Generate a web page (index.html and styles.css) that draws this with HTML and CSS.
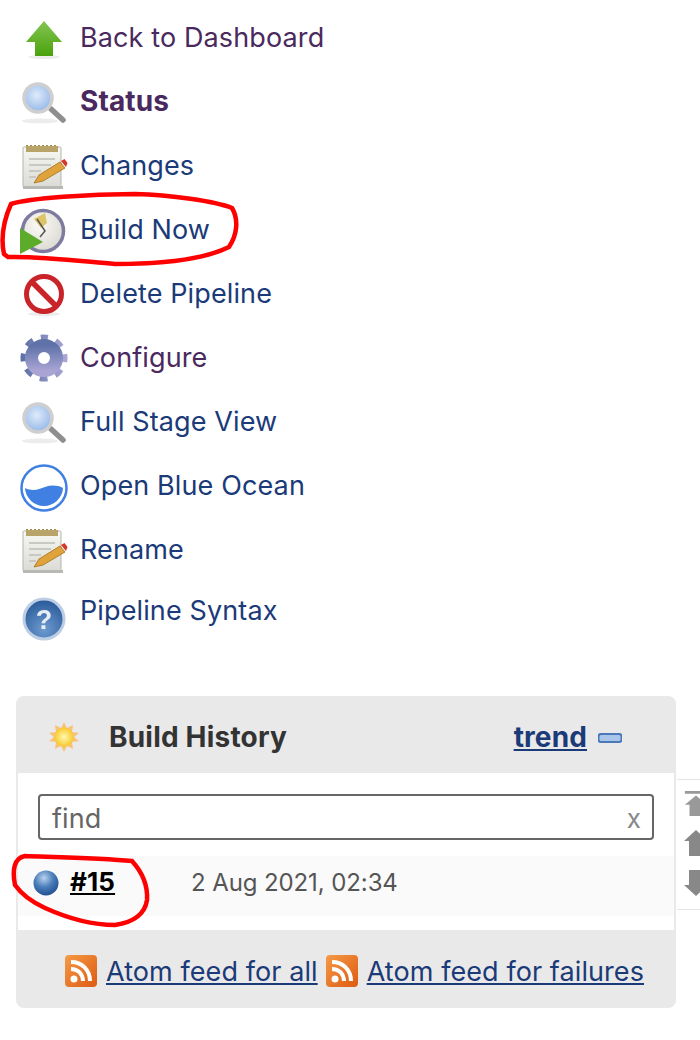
FILE: index.html
```html
<!DOCTYPE html>
<html>
<head>
    <meta charset="utf-8">
    <link rel="stylesheet" href="styles.css">
    <title>Pipeline</title>
</head>
<body>
    <svg class="defs" width="0" height="0">
        <defs>
            <linearGradient id="gArrow" x1="0" y1="0" x2="0" y2="1"><stop offset="0" stop-color="#84c553"/><stop offset="1" stop-color="#4aa20c"/></linearGradient>
            <radialGradient id="gLens" cx="0.45" cy="0.4" r="0.65"><stop offset="0" stop-color="#dfeafa"/><stop offset="1" stop-color="#8fb5e6"/></radialGradient>
            <linearGradient id="gPaper" x1="0" y1="0" x2="0" y2="1"><stop offset="0" stop-color="#f7f7f3"/><stop offset="1" stop-color="#dcdcd6"/></linearGradient>
            <linearGradient id="gGear" x1="0" y1="0" x2="0" y2="1"><stop offset="0" stop-color="#5f72a8"/><stop offset="1" stop-color="#a9a4d4"/></linearGradient>
            <radialGradient id="gClock" cx="0.4" cy="0.35" r="0.75"><stop offset="0" stop-color="#fbfaf5"/><stop offset="1" stop-color="#d8d6cf"/></radialGradient>
            <radialGradient id="gHelp" cx="0.5" cy="0.75" r="0.7"><stop offset="0" stop-color="#6d9bd0"/><stop offset="1" stop-color="#2c5c9b"/></radialGradient>
            <radialGradient id="gBall" cx="0.42" cy="0.3" r="0.75"><stop offset="0" stop-color="#b8d3ee"/><stop offset="0.5" stop-color="#4a7db9"/><stop offset="1" stop-color="#1e4a8c"/></radialGradient>
            <radialGradient id="gSun" cx="0.5" cy="0.5" r="0.5"><stop offset="0" stop-color="#fff9b0"/><stop offset="1" stop-color="#f8c92e"/></radialGradient>
            <linearGradient id="gRss" x1="0" y1="0" x2="1" y2="1"><stop offset="0" stop-color="#f59a45"/><stop offset="1" stop-color="#dd5a12"/></linearGradient>
            <symbol id="iconSearch" viewBox="0 0 48 48" overflow="visible">
                <ellipse cx="20" cy="44" rx="18" ry="2.500" fill="#ececec"/>
                <path d="M31 32l12 11" stroke="#8f8f8f" stroke-width="5.500" stroke-linecap="round"/>
                <circle cx="18" cy="21" r="14" fill="url(#gLens)" stroke="#cfcfcf" stroke-width="3.500"/>
            </symbol>
            <symbol id="iconNote" viewBox="0 0 48 48" overflow="visible">
                <rect x="3" y="6" width="38" height="40" rx="1" fill="url(#gPaper)" stroke="#b5b5ae"/>
                <rect x="3" y="45" width="40" height="3" fill="#b9b9b4"/>
                <rect x="6" y="5" width="32" height="6" fill="#b8a468"/>
                <path d="M7 5v-1M11 5v-1M15 5v-1M19 5v-1M23 5v-1M27 5v-1M31 5v-1M35 5v-1" stroke="#a08c50" stroke-width="2"/>
                <path d="M9 18h26M9 24h22M9 30h12M9 36h7" stroke="#c8c8c4" stroke-width="2"/>
                <path d="M14 42l5-8 21-13 5 6-22 13z" fill="#e0a33c" stroke="#b0812f"/>
                <path d="M41 20l5 6 1.500-4-3-4z" fill="#d8342c"/>
            </symbol>
            <symbol id="iconRss" viewBox="0 0 32 32">
                <rect width="32" height="32" rx="4" fill="url(#gRss)"/>
                <circle cx="9" cy="24" r="3.500" fill="#fff"/>
                <path d="M6 14c7 0 12 5 12 12M6 7c11 0 19 8 19 19" fill="none" stroke="#fff" stroke-width="4"/>
            </symbol>
        </defs>
    </svg>

    <ul class="side-tasks">
        <li class="task">
            <svg class="task-icon" viewBox="0 0 48 48"><ellipse cx="24" cy="44" rx="16" ry="2" fill="#ececec"/><path d="M24 8L42 29H33V43H15V29H6z" fill="url(#gArrow)"/></svg>
            <a class="visited" href="#">Back to Dashboard</a>
        </li>
        <li class="task">
            <svg class="task-icon"><use href="#iconSearch"/></svg>
            <a class="visited current" href="#">Status</a>
        </li>
        <li class="task">
            <svg class="task-icon"><use href="#iconNote"/></svg>
            <a href="#">Changes</a>
        </li>
        <li class="task">
            <svg class="task-icon" viewBox="0 0 48 48">
                <circle cx="23" cy="26" r="20.500" fill="url(#gClock)" stroke="#7d7ca0" stroke-width="3.500"/>
                <path d="M14 14L25 8 27 18 21 23z" fill="#dcc467"/>
                <path d="M17 14l8 12-5 6" fill="none" stroke="#555" stroke-width="1.500"/>
                <path d="M0 23L23 37 0 49z" fill="#5cab2a"/>
            </svg>
            <a href="#">Build Now</a>
        </li>
        <li class="task">
            <svg class="task-icon" viewBox="0 0 48 48">
                <ellipse cx="24" cy="45" rx="16" ry="2" fill="#ececec"/>
                <circle cx="24" cy="25" r="17.500" fill="#fff" stroke="#c8242a" stroke-width="5"/>
                <path d="M12 13l24 24" stroke="#c8242a" stroke-width="5.500"/>
            </svg>
            <a href="#">Delete Pipeline</a>
        </li>
        <li class="task">
            <svg class="task-icon" viewBox="0 0 48 48">
                <circle cx="24" cy="25" r="20" fill="none" stroke="url(#gGear)" stroke-width="7" stroke-dasharray="7.700 8" stroke-dashoffset="3.850" transform="rotate(-90 24 25)"/>
                <circle cx="24" cy="25" r="12.500" fill="none" stroke="url(#gGear)" stroke-width="13"/>
            </svg>
            <a class="visited" href="#">Configure</a>
        </li>
        <li class="task">
            <svg class="task-icon"><use href="#iconSearch"/></svg>
            <a href="#">Full Stage View</a>
        </li>
        <li class="task">
            <svg class="task-icon task-icon-sharp" viewBox="0 0 48 48">
                <circle cx="24" cy="27" r="22.500" fill="#fff" stroke="#3f80e2" stroke-width="2.500"/>
                <path d="M5 27c8 4 14 1 20-1 6-2 12-2 18 1-0.500 10-9 18-19 18S5.500 37 5 27z" fill="#3f80e2"/>
            </svg>
            <a href="#">Open Blue Ocean</a>
        </li>
        <li class="task">
            <svg class="task-icon"><use href="#iconNote"/></svg>
            <a href="#">Rename</a>
        </li>
        <li class="task task-last">
            <svg class="task-icon" viewBox="0 0 48 48">
                <circle cx="24" cy="33" r="20" fill="url(#gHelp)" stroke="#bccde4" stroke-width="3"/>
                <text class="help-mark" x="24" y="43">?</text>
            </svg>
            <a href="#">Pipeline Syntax</a>
        </li>
    </ul>

    <div class="history-wrap">
        <div class="history">
            <div class="history-head">
                <svg class="sun" viewBox="0 0 32 32">
                    <path d="M16 1l3 6 6-3-1 7 7 1-5 4 5 4-7 1 1 7-6-3-3 6-3-6-6 3 1-7-7-1 5-4-5-4 7-1-1-7 6 3z" fill="#f7c27a"/>
                    <circle cx="16" cy="16" r="9.500" fill="url(#gSun)"/>
                </svg>
                <span class="history-title">Build History</span>
                <a class="trend" href="#">trend</a>
                <svg class="minus" viewBox="0 0 24 10"><rect x="0.500" y="1" width="23" height="8" rx="2.500" fill="#a9c5ea" stroke="#4a78b8" stroke-width="2"/></svg>
            </div>
            <div class="history-body">
                <div class="find-box">
                    <span class="find-text">find</span>
                    <span class="find-clear">x</span>
                </div>
                <div class="build-row">
                    <svg class="ball" viewBox="0 0 26 26"><circle cx="13" cy="13" r="12.500" fill="url(#gBall)"/></svg>
                    <a class="build-no" href="#">#15</a>
                    <span class="build-date">2 Aug 2021, 02:34</span>
                </div>
            </div>
            <div class="history-foot">
                <svg class="rss"><use href="#iconRss"/></svg>
                <a class="feed" href="#">Atom feed for all</a>
                <svg class="rss"><use href="#iconRss"/></svg>
                <a class="feed" href="#">Atom feed for failures</a>
            </div>
        </div>
        <div class="pager">
            <svg viewBox="0 0 24 28"><path d="M0 1h24v3H0zM12 6l12 10h-5v12H5V16H0z" fill="#999"/></svg>
            <svg viewBox="0 0 24 26"><path d="M12 0l12 11h-5v15H5V11H0z" fill="#888"/></svg>
            <svg viewBox="0 0 24 26"><path d="M12 26L24 15h-5V0H5v15H0z" fill="#888"/></svg>
        </div>
    </div>

    <!-- red marker scribbles on top of the screenshot -->
    <svg class="marks" viewBox="0 0 700 1040">
        <path d="M4 254C1 240 3 222 11 204 30 198 90 194 135 194 170 195 215 201 232 208 239 220 237 235 229 247 205 259 165 264 115 264 80 261 40 256 8 257z"/>
        <path d="M15 885C12 870 14 858 25 856 50 857 100 858 132 861 142 872 148 885 147 900 145 914 135 922 115 925 90 925 65 917 45 908 32 902 22 895 15 885z"/>
    </svg>
</body>
</html>
```

FILE: styles.css
```css
* {
    box-sizing: border-box;
}

html, body {
    overflow: hidden;
}

body {
    margin: 0;
    width: 700px;
    height: 1040px;
    position: relative;
    background-color: #fff;
    font-family: Inter, "Liberation Sans", sans-serif;
    font-size: 27px;
    letter-spacing: 0.12px;
    color: #333;
}

a {
    color: #1b3a78;
}

.defs {
    position: absolute;
}

/* side tasks */
.side-tasks {
    list-style-type: none;
    margin: 0;
    padding: 5px 0 0 20px;
}

.task {
    display: flex;
    align-items: center;
    gap: 12px;
    height: 64px;
}

.task-last {
    height: 58px;
}

.task a {
    text-decoration: none;
}

.task a.visited {
    color: #4a2a5e;
}

.task a.current {
    font-size: 28px;
    font-weight: 700;
}

.task-icon {
    width: 48px;
    height: 48px;
    flex: none;
    overflow: visible;
    filter: blur(0.5px);
}

.task-icon-sharp {
    filter: none;
}

.help-mark {
    font-family: "Liberation Sans", sans-serif;
    font-size: 27px;
    font-weight: 700;
    fill: #e8eef6;
    text-anchor: middle;
}

/* build history */
.history-wrap {
    display: flex;
    align-items: flex-start;
    margin: 57px 0 0 16px;
}

.history {
    flex: none;
    width: 660px;
    height: 312px;
    background-color: #e9e9e9;
    border-radius: 8px;
    display: flex;
    flex-direction: column;
}

.history-head {
    height: 77px;
    display: flex;
    align-items: center;
    padding: 4px 54px 0 32px;
    font-size: 28px;
}

.sun {
    width: 32px;
    height: 32px;
    filter: blur(0.5px);
}

.history-title {
    margin-left: 29px;
    font-weight: 700;
    letter-spacing: 0.2px;
}

.trend {
    margin-left: auto;
    font-weight: 700;
}

.minus {
    width: 24px;
    height: 10px;
    margin-left: 11px;
    margin-top: 3px;
}

.history-body {
    height: 157px;
    margin: 0 2px;
    padding-top: 21px;
    background-color: #fff;
}

.find-box {
    display: flex;
    justify-content: space-between;
    align-items: center;
    width: 616px;
    height: 46px;
    margin-left: 20px;
    padding: 2px 11px 0 12px;
    border: 2px solid #666;
    border-radius: 4px;
    color: #666;
}

.find-clear {
    font-size: 26px;
    color: #888;
}

.build-row {
    display: flex;
    align-items: center;
    height: 60px;
    margin-top: 16px;
    padding: 0 0 6px 15px;
    background-color: #fafafa;
}

.ball {
    width: 26px;
    height: 26px;
    flex: none;
}

.build-no {
    margin: 0 0 3px 11px;
    width: 121px;
    font-size: 26px;
    font-weight: 700;
    color: #000;
}

.build-date {
    margin-bottom: 2px;
    font-size: 24px;
    letter-spacing: -0.1px;
    color: #555;
}

.history-foot {
    flex: 1;
    display: flex;
    align-items: center;
    justify-content: flex-end;
    padding: 4px 32px 0 0;
    letter-spacing: 0.08px;
}

.rss {
    width: 32px;
    height: 32px;
    flex: none;
}

.feed {
    margin-left: 9px;
    margin-right: 8px;
}

.feed:last-child {
    margin-right: 0;
}

.pager {
    flex: none;
    width: 40px;
    height: 131px;
    margin-top: 83px;
    margin-left: 1px;
    padding: 10px 0 0 7px;
    border-top: 1px solid #e4e4e4;
    border-bottom: 1px solid #e4e4e4;
    display: flex;
    flex-direction: column;
    gap: 14px;
}

.pager svg {
    display: block;
    width: 24px;
    height: 26px;
}

/* annotation layer */
.marks {
    position: absolute;
    left: 0;
    top: 0;
    width: 700px;
    height: 1040px;
    pointer-events: none;
}

.marks path {
    fill: none;
    stroke: #f00;
    stroke-width: 4.500;
}
```
